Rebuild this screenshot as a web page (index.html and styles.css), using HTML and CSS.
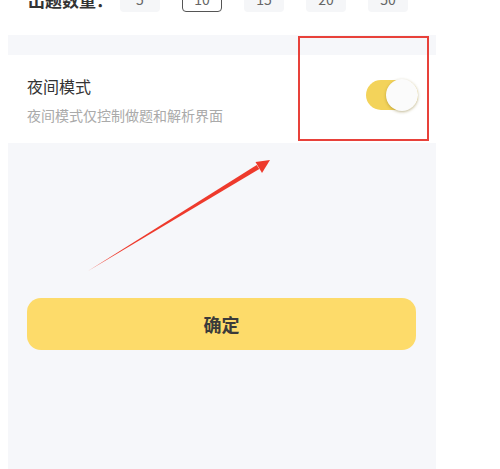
FILE: index.html
```html
<!DOCTYPE html>
<html lang="zh-CN">
<head>
  <meta charset="UTF-8" />
  <meta name="viewport" content="width=device-width, initial-scale=1" />
  <title>设置</title>
  <link rel="stylesheet" href="styles.css">
</head>
<body>
  <div class="settings">
    <div class="count-row">
      <div class="count-label">出题数量：</div>
      <div class="chips">
        <span class="chip">5</span>
        <span class="chip active">10</span>
        <span class="chip">15</span>
        <span class="chip">20</span>
        <span class="chip">50</span>
      </div>
    </div>

    <div class="panel">
      <div class="option-card">
        <div class="option-text">
          <div class="option-title">夜间模式</div>
          <div class="option-desc">夜间模式仅控制做题和解析界面</div>
        </div>
        <div class="switch on"><div class="knob"></div></div>
      </div>

      <button class="confirm-button">确定</button>
    </div>
  </div>

  <!-- annotation marks -->
  <div class="mark-box"></div>
  <svg class="mark-arrow" viewBox="0 0 500 469" width="500" height="469">
    <polygon points="88,271 256.7,164.9 259.3,169.1" fill="#ee3a2c"/>
    <polygon points="270,160 255.5,162 262,173" fill="#ee3a2c"/>
  </svg>
</body>
</html>
```

FILE: styles.css
```css
html, body {
  margin: 0;
  height: 100%;
  background: #fff;
  font-family: "Noto Sans CJK SC", "Noto Sans", sans-serif;
  color: #333;
  overflow: hidden;
}

.settings {
  width: 428px;
  margin-left: 8px;
  height: 100%;
  display: flex;
  flex-direction: column;
}

.count-row {
  display: flex;
  align-items: center;
  height: 30px;
  margin-top: -16px;
  padding-left: 20px;
}

.count-label {
  font-size: 17px;
  font-weight: 700;
  color: #333;
  width: 92px;
  white-space: nowrap;
}

.chips {
  display: flex;
  gap: 22px;
}

.chip {
  width: 40px;
  height: 26px;
  box-sizing: border-box;
  background: #f5f6f8;
  border-radius: 4px;
  font-size: 14px;
  color: #666;
  display: flex;
  align-items: center;
  justify-content: center;
}

.chip.active {
  background: #fff;
  border: 1px solid #555;
}

.panel {
  flex: 1;
  margin-top: 21px;
  padding-top: 20px;
  background: #f6f7fa;
}

.option-card {
  height: 88px;
  background: #fff;
  display: flex;
  align-items: center;
  padding: 0 18px 0 19px;
}

.option-text {
  flex: 1;
}

.option-title {
  font-size: 16px;
  line-height: 22px;
  color: #333;
}

.option-desc {
  margin-top: 9px;
  font-size: 14px;
  line-height: 18px;
  color: #aaa;
}

.switch {
  position: relative;
  width: 52px;
  height: 30px;
  border-radius: 15px;
  background: #f3d35a;
  margin-bottom: 8px;
}

.switch .knob {
  position: absolute;
  right: 0;
  top: -1px;
  width: 32px;
  height: 32px;
  border-radius: 50%;
  background: #fbfbfb;
  box-shadow: 0 1px 3px rgba(120, 100, 20, 0.45);
}

.confirm-button {
  display: block;
  margin: 155px 0 0 19px;
  width: 389px;
  height: 52px;
  border: none;
  border-radius: 14px;
  background: #fddb6a;
  font-family: inherit;
  font-size: 18px;
  font-weight: 700;
  color: #3a3a3a;
}

.mark-box {
  position: absolute;
  left: 298px;
  top: 36px;
  width: 131px;
  height: 105px;
  box-sizing: border-box;
  border: 2px solid #e8413a;
}

.mark-arrow {
  position: absolute;
  left: 0;
  top: 0;
  pointer-events: none;
}
```
